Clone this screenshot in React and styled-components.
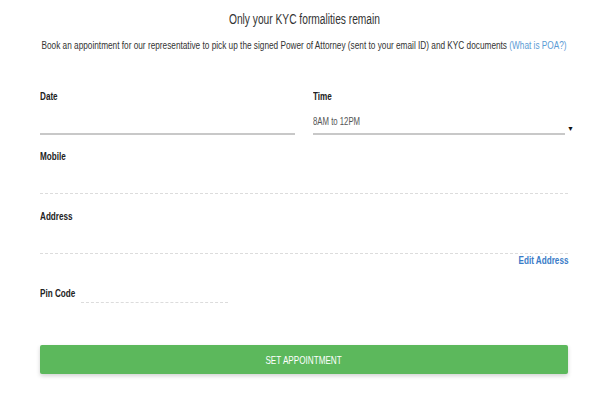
import React from 'react';
import styled, { createGlobalStyle } from 'styled-components';

const GlobalStyle = createGlobalStyle`
  body {
    margin: 0;
    background: #fff;
    font-family: "Liberation Sans", Arial, sans-serif;
    color: #333;
  }
`;

// the screenshot's font is a condensed face; squeeze Liberation Sans to match
const Narrow = styled.span`
  display: inline-block;
  white-space: nowrap;
  transform: scaleX(${(p) => p.$scale || 0.74});
  transform-origin: ${(p) => p.$origin || 'left'} center;
`;

const Page = styled.div`
  width: 600px;
  height: 400px;
  padding: 0 32px 0 40px;
  box-sizing: border-box;
`;

const Title = styled.h1`
  display: flex;
  justify-content: center;
  margin: 0;
  padding-top: 10px;
  line-height: 18px;
  font-size: 14px;
  font-weight: normal;
  color: #333;
`;

const Subtitle = styled.p`
  display: flex;
  justify-content: center;
  margin: 10px 0 0;
  line-height: 14px;
  font-size: 11px;
  color: #333;
`;

const Link = styled.a`
  color: #5b9bd5;
  text-decoration: none;
`;

const Row = styled.div`
  display: grid;
  grid-template-columns: 255px 1fr;
  column-gap: 18px;
  margin-top: 38px;
`;

const Field = styled.div`
  display: flex;
  flex-direction: column;
  margin-top: ${(p) => p.$top || 0}px;
`;

const Label = styled.label`
  font-size: 11px;
  font-weight: bold;
  line-height: 12px;
  color: #222;
`;

const SolidInput = styled.div`
  height: 24px;
  margin-top: 7px;
  border-bottom: 2px solid #c8c8c8;
  font-size: 10.5px;
  line-height: 24px;
  color: #555;
`;

const SelectRow = styled.div`
  display: flex;
  align-items: flex-end;
  margin-top: 7px;
`;

const Arrow = styled.span`
  font-size: 7px;
  color: #111;
  margin: 0 -6px 3px 2px;
`;

const DashedInput = styled.div`
  height: 24px;
  margin-top: 7px;
  border-bottom: 1px dashed #dcdcdc;
`;

const EditLink = styled.a`
  align-self: flex-end;
  font-size: 11px;
  font-weight: bold;
  line-height: 12px;
  color: #3a7bc8;
  text-decoration: none;
`;

const PinRow = styled.div`
  display: flex;
  align-items: flex-end;
  margin-top: 18px;
`;

const PinInput = styled.div`
  width: 147px;
  height: 18px;
  margin: 0 0 -4px -7px;
  border-bottom: 1px dashed #dcdcdc;
`;

const Button = styled.button`
  display: flex;
  justify-content: center;
  align-items: center;
  width: 100%;
  height: 29px;
  margin-top: 46px;
  border: none;
  border-radius: 2px;
  background: #5cb85c;
  color: #fff;
  font-family: inherit;
  font-size: 11px;
  text-transform: uppercase;
  box-shadow: 0 2px 4px rgba(0, 0, 0, 0.18);
`;

const App = () => {
  return (
    <Page>
      <GlobalStyle />
      <Title>
        <Narrow $origin="center" $scale={0.73}>Only your KYC formalities remain</Narrow>
      </Title>
      <Subtitle>
        <Narrow $origin="center" $scale={0.75}>
          Book an appointment for our representative to pick up the signed Power of Attorney (sent to your email ID) and KYC documents{' '}
          <Link href="#">(What is POA?)</Link>
        </Narrow>
      </Subtitle>
      <Row>
        <Field>
          <Label><Narrow>Date</Narrow></Label>
          <SolidInput />
        </Field>
        <Field>
          <Label><Narrow>Time</Narrow></Label>
          <SelectRow>
            <SolidInput style={{ flex: 1, marginTop: 0 }}>
              <Narrow>8AM to 12PM</Narrow>
            </SolidInput>
            <Arrow>▼</Arrow>
          </SelectRow>
        </Field>
      </Row>
      <Field $top={15}>
        <Label><Narrow>Mobile</Narrow></Label>
        <DashedInput />
      </Field>
      <Field $top={16}>
        <Label><Narrow>Address</Narrow></Label>
        <DashedInput />
        <EditLink href="#"><Narrow $origin="right">Edit Address</Narrow></EditLink>
      </Field>
      <PinRow>
        <Label><Narrow>Pin Code</Narrow></Label>
        <PinInput />
      </PinRow>
      <Button>
        <Narrow $origin="center">Set Appointment</Narrow>
      </Button>
    </Page>
  );
};

export default App;
